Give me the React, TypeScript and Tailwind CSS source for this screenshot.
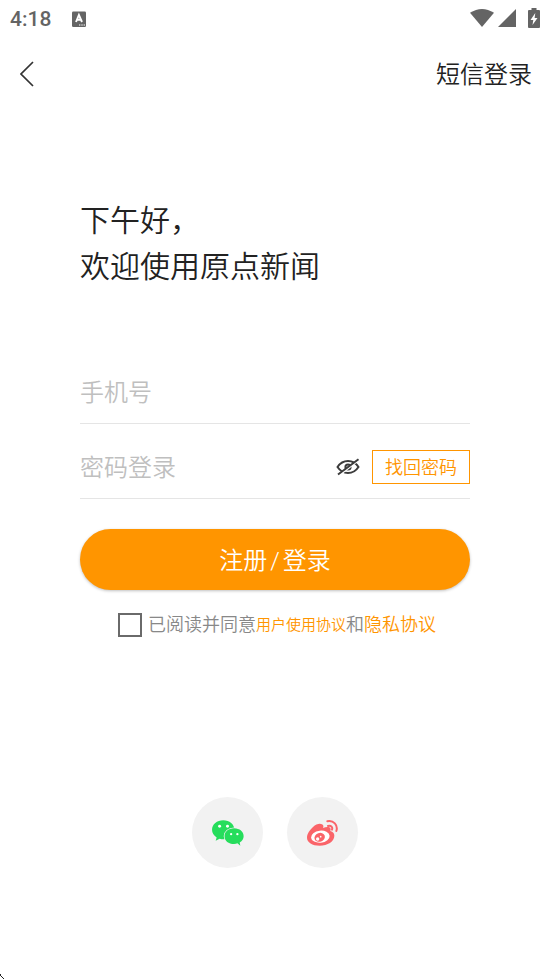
import { useState } from "react";
import type { InputHTMLAttributes, ReactNode } from "react";

/* ------------------------------------------------------------------ */
/*  StatusBar                                                         */
/* ------------------------------------------------------------------ */
function StatusBar() {
  return (
    <div className="flex h-9 items-center justify-between pl-[10px] pr-[10px] text-[#646464]">
      <div className="flex items-center gap-5 pt-[2px]">
        <span className="font-[Roboto] text-[21px] font-medium leading-8">4:18</span>
        <svg className="h-4 w-4" viewBox="0 0 16 16" fill="currentColor" aria-hidden="true">
          <rect x="1" y="0.5" width="14" height="15.5" rx="1.3" />
          <path d="M5 11 7.9 4 11 11M6 8.7h4" fill="none" stroke="#fff" strokeWidth="1.9" />
          <path d="M8 14h1.4M10.3 14h1.4M12.6 14H14" stroke="#fff" strokeWidth="1" />
        </svg>
      </div>
      <div className="flex items-center">
        <svg className="h-[18px] w-6" viewBox="0 0 24 18" fill="currentColor" aria-hidden="true">
          <path d="M0 3.8Q12-3.8 24 3.8L12 18Z" />
        </svg>
        <svg className="ml-1 h-[18px] w-[18px]" viewBox="0 0 18 18" fill="currentColor" aria-hidden="true">
          <path d="M18 0v18H0Z" />
        </svg>
        <svg className="ml-3 h-5 w-3" viewBox="0 0 12 20" fill="currentColor" aria-hidden="true">
          <path d="M3.5 0h5v2H11q1 0 1 1v16q0 1-1 1H1q-1 0-1-1V3q0-1 1-1h2.500Z" />
          <path d="M7.300 5 2.500 12h2.800L4.500 17l5-7H6.600Z" fill="#fff" />
        </svg>
      </div>
    </div>
  );
}

/* ------------------------------------------------------------------ */
/*  Field                                                             */
/* ------------------------------------------------------------------ */
interface FieldProps extends InputHTMLAttributes<HTMLInputElement> {
  label: string;
  children?: ReactNode;
}
function Field({ label, children, ...props }: FieldProps) {
  return (
    <div className="flex h-[75px] items-center border-b border-[#e5e5e5] pt-3">
      <input
        aria-label={label}
        placeholder={label}
        className="h-10 min-w-0 flex-1 bg-transparent pt-[2px] text-[24px] text-[#222] outline-none placeholder:text-[#bfbfbf]"
        {...props}
      />
      {children}
    </div>
  );
}

/* ------------------------------------------------------------------ */
/*  Icons                                                             */
/* ------------------------------------------------------------------ */
function EyeOffIcon() {
  return (
    <svg className="h-[18px] w-6" viewBox="0 0 24 18" fill="none" stroke="#3c3c3c" strokeWidth="2" aria-hidden="true">
      <path d="M1.500 9Q5.500 3 12 3T22.500 9Q18.500 15 12 15T1.500 9Z" />
      <circle cx="12" cy="9" r="2.600" />
      <path d="M3.500 17 22 2.500" stroke="#fff" strokeWidth="2" />
      <path d="M2 16.500 22.500 1.200" />
    </svg>
  );
}

function WechatIcon() {
  return (
    <svg className="h-[26px] w-8" viewBox="80 88 97 79" fill="#26dd5c" aria-hidden="true">
      <path d="M114 89C95 89 80 101 80 118C80 128 85 135 94 141L91 151L103 145Q113 148 124 146C138 143 148 132 148 118C148 101 133 89 114 89Z" />
      <circle cx="103" cy="107" r="4.500" fill="#fff" />
      <circle cx="127" cy="107" r="4.500" fill="#fff" />
      <path
        d="M147 113C130 113 118 124 118 137C118 151 130 161 147 161Q153 161 157 159L166 166L164 156Q176 149 176 137C176 124 164 113 147 113Z"
        stroke="#f2f2f2"
        strokeWidth="5"
        paintOrder="stroke"
      />
      <circle cx="138" cy="131" r="3.500" fill="#fff" />
      <circle cx="157" cy="131" r="3.500" fill="#fff" />
    </svg>
  );
}

function WeiboIcon() {
  return (
    <svg className="h-[26px] w-[31px]" viewBox="81 89 93 78" fill="#fa6469" aria-hidden="true">
      <path d="M126 102C131 104 131 109 129 113C137 110 148 109 151 113Q153 116 151 122C159 125 163 129 163 136C163 153 143 166 119 166C97 166 81 156 81 142C81 131 89 119 99 110C108 102 119 98 126 102Z" />
      <ellipse cx="121" cy="139" rx="28" ry="18" fill="#fff" transform="rotate(-6 121 139)" />
      <ellipse cx="119" cy="141" rx="16" ry="13" transform="rotate(-20 119 141)" />
      <circle cx="113" cy="146" r="5" fill="#fff" />
      <circle cx="122" cy="139" r="2.500" fill="#fff" />
      <path d="M142 93C160 89 175 104 169 122M144 107C152 104 159 110 156 118" fill="none" stroke="#fa6469" strokeWidth="6" strokeLinecap="round" />
    </svg>
  );
}

/* ------------------------------------------------------------------ */
/*  SocialButton                                                      */
/* ------------------------------------------------------------------ */
function SocialButton({ label, children }: { label: string; children: ReactNode }) {
  return (
    <button type="button" aria-label={label} className="flex h-[71px] w-[71px] items-center justify-center rounded-full bg-[#f2f2f2]">
      {children}
    </button>
  );
}

export default function App() {
  const [visible, setVisible] = useState(false);

  return (
    <div className="relative flex min-h-screen flex-col overflow-hidden bg-white font-['Roboto','Noto_Sans_CJK_SC',sans-serif] font-[350] text-[#222]">
      <StatusBar />

      <header className="flex h-[76px] items-center justify-between pl-5 pr-[18px]">
        <button type="button" aria-label="返回" className="py-2">
          <svg className="h-[26px] w-[14px]" viewBox="0 0 14 26" fill="none" stroke="#333" strokeWidth="1.7" aria-hidden="true">
            <path d="M13 1 1 13 13 25" />
          </svg>
        </button>
        <button type="button" className="pt-[2px] text-[24px] leading-9">短信登录</button>
      </header>

      <main className="flex flex-col px-20 pt-[86px]">
        <h1 className="text-[30px] leading-[46px]">
          下午好，
          <br />
          欢迎使用原点新闻
        </h1>

        <form className="pt-[59px]" onSubmit={(e) => e.preventDefault()}>
          <Field label="手机号" type="tel" />
          <Field label="密码登录" type={visible ? "text" : "password"}>
            <button type="button" aria-label="显示密码" onClick={() => setVisible(!visible)}>
              <EyeOffIcon />
            </button>
            <button type="button" className="ml-3 h-[34px] w-[98px] border border-[#ff9500] pt-px text-[18px] leading-8 text-[#ff9500]">
              找回密码
            </button>
          </Field>

          <button
            type="submit"
            className="mt-[30px] flex h-[61px] w-full items-center justify-center gap-[3px] rounded-full bg-[#ff9500] pt-[2px] text-[24px] text-white shadow-[0_1px_3px_rgba(0,0,0,0.25)]"
          >
            <span>注册</span>
            <span>/</span>
            <span>登录</span>
          </button>

          <div className="mt-[21px] flex items-center justify-center whitespace-nowrap pl-1 text-[18px] leading-7 text-[#888]">
            <input
              id="agree"
              type="checkbox"
              className="mr-[6px] h-6 w-6 appearance-none border-2 border-[#6a6a6a] checked:bg-[#ff9500]"
            />
            <label htmlFor="agree">已阅读并同意</label>
            <a href="#terms" className="text-[15px] text-[#ff9500]">用户使用协议</a>
            <span>和</span>
            <a href="#privacy" className="text-[#ff9500]">隐私协议</a>
          </div>
        </form>

        <div className="flex justify-center gap-6 pb-10 pt-[158px]">
          <SocialButton label="微信登录">
            <WechatIcon />
          </SocialButton>
          <SocialButton label="微博登录">
            <WeiboIcon />
          </SocialButton>
        </div>
      </main>

      {/* pointer tip in the corner */}
      <svg className="absolute bottom-0 left-0 h-[5px] w-[5px]" viewBox="0 0 5 5" fill="#222" aria-hidden="true">
        <path d="M0 0h1v1H0ZM1 2h1v1H1ZM2 3h1v1H2ZM3 4h1v1H3ZM0 1h1v1H0Z" />
      </svg>
    </div>
  );
}
